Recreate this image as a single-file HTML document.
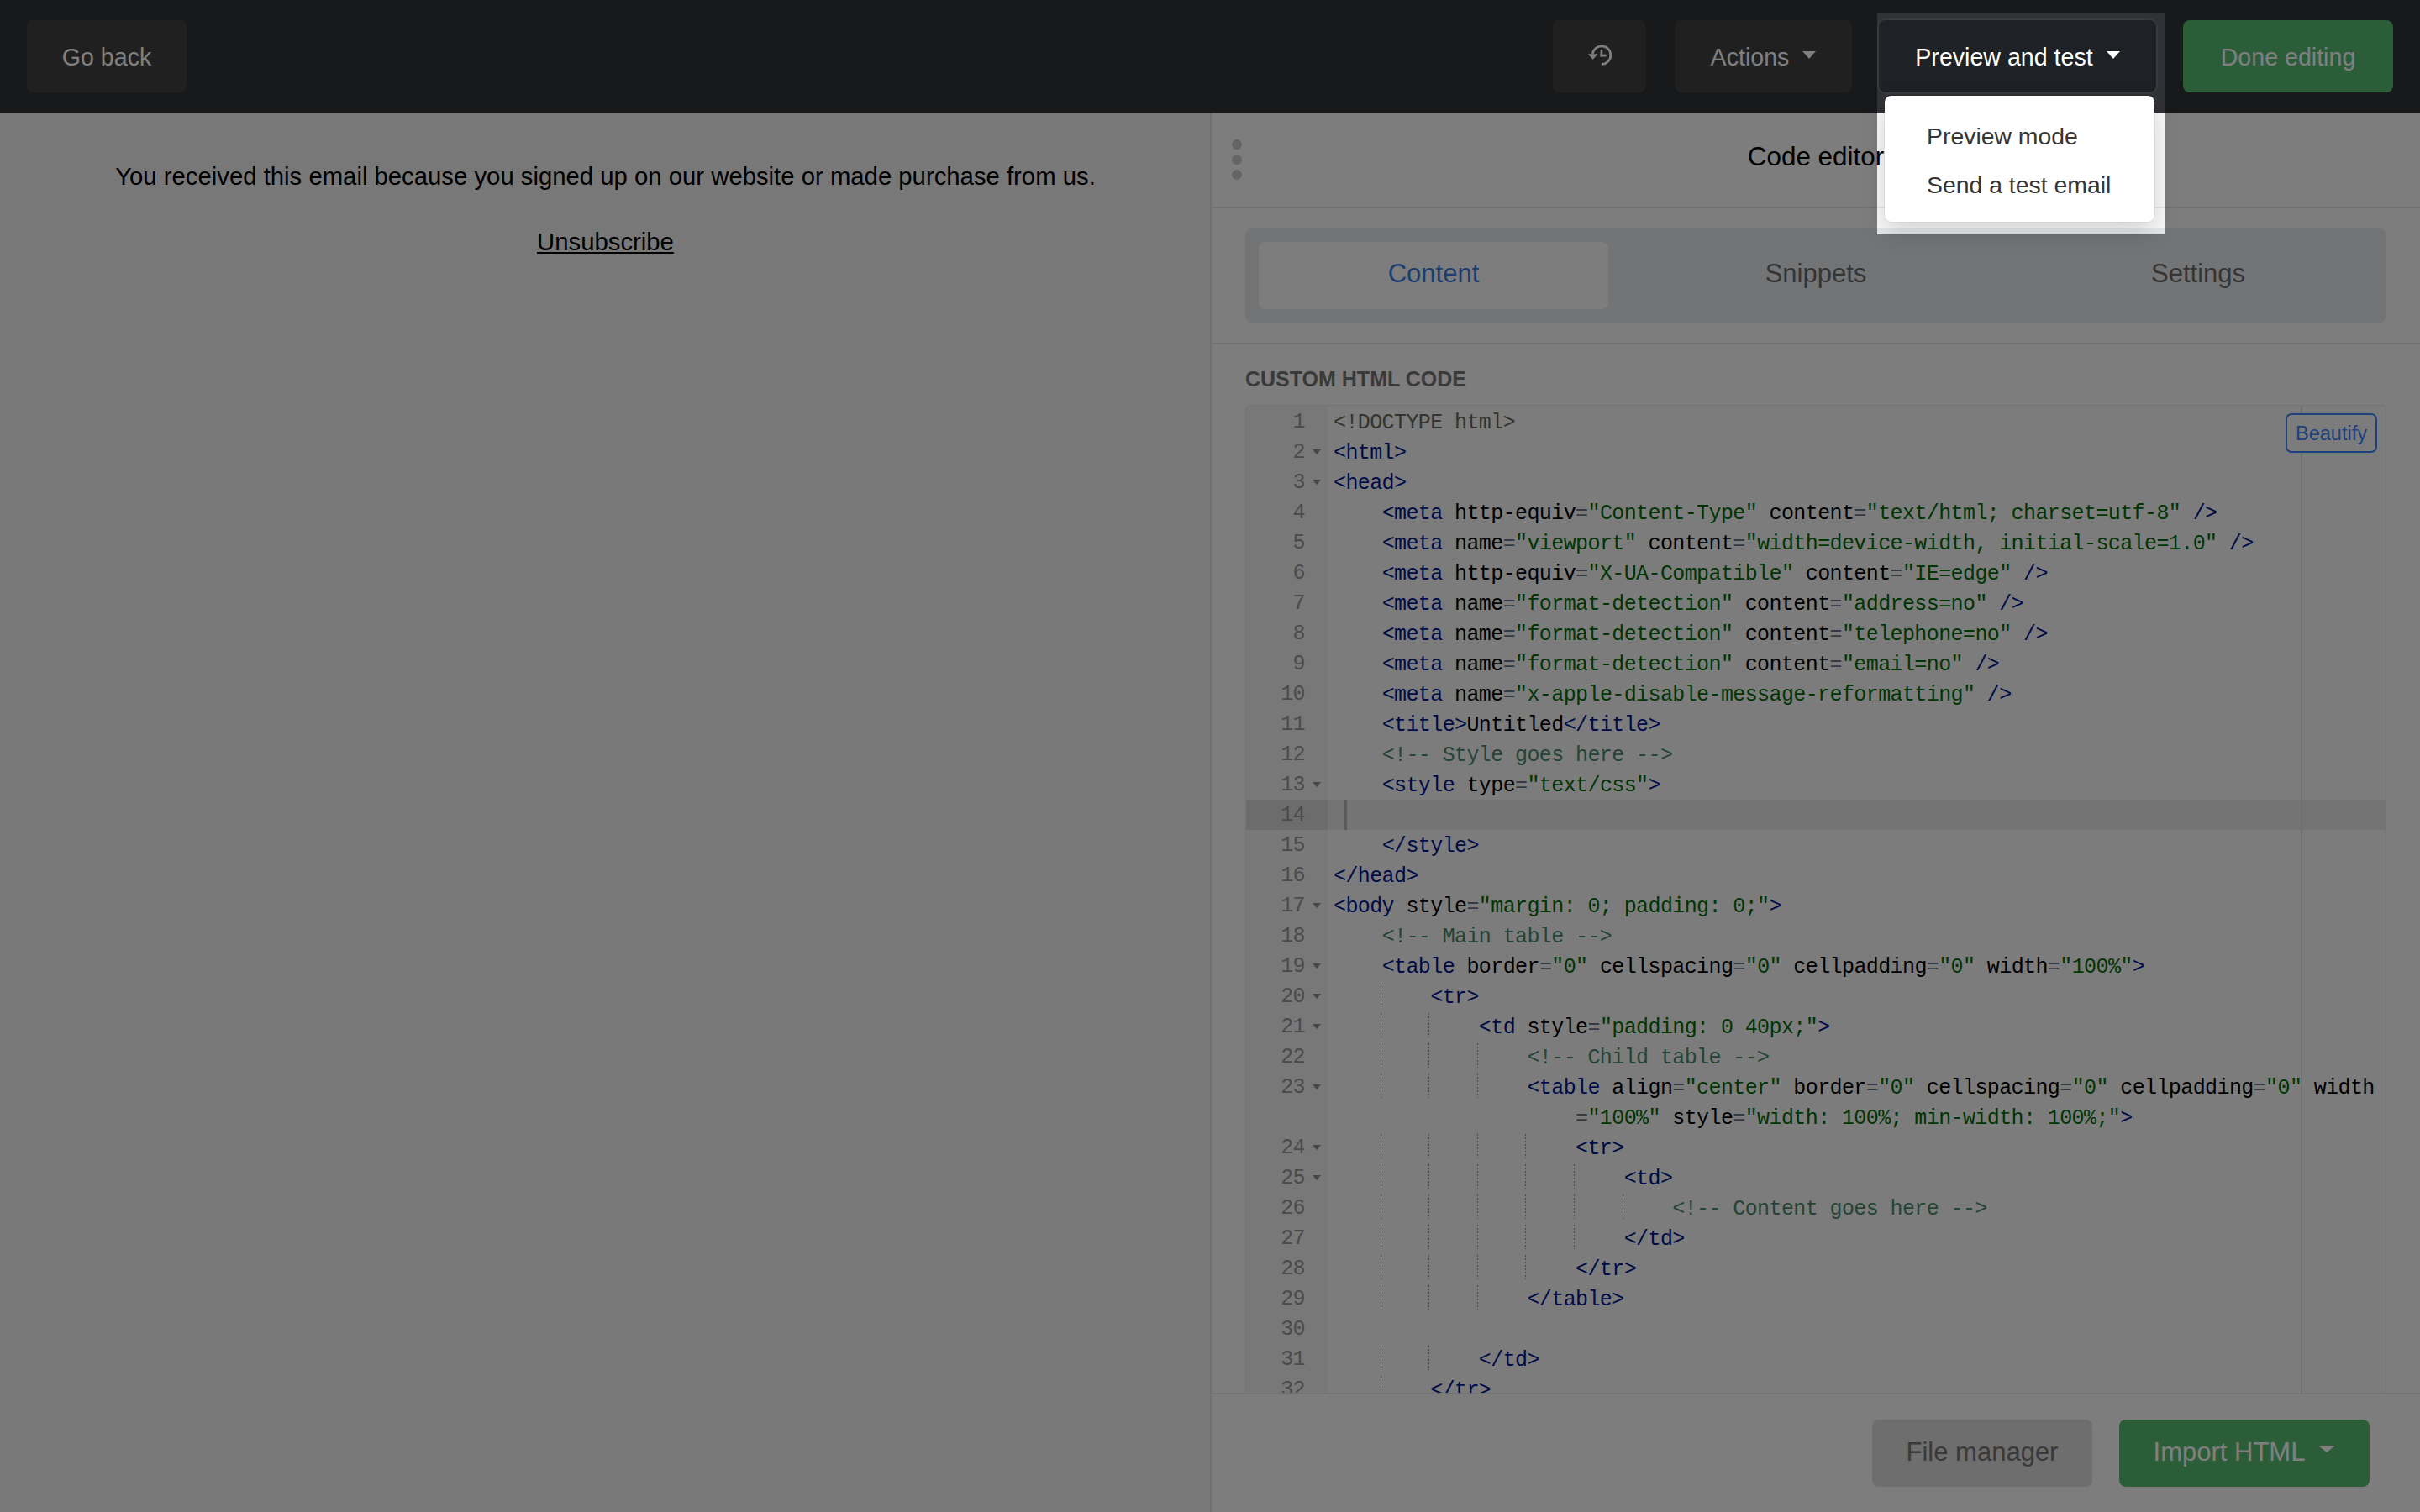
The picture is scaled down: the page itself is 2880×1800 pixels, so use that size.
<!DOCTYPE html>
<html>
<head>
<meta charset="utf-8">
<title>Code editor</title>
<style>
*{box-sizing:border-box;margin:0;padding:0}
html,body{width:2880px;height:1800px;overflow:hidden}
body{position:relative;background:#f4f4f4;font-family:"Liberation Sans",sans-serif;color:#000}
.abs{position:absolute}
.t1{position:absolute;line-height:1;white-space:pre}
#hdr{left:0;top:0;width:2880px;height:134px;background:#303236}
.hbtn{position:absolute;top:24px;height:86px;border-radius:8px;background:#404142;color:#fff;font-size:28.6px;line-height:88px;text-align:center;white-space:nowrap}
.caret{display:inline-block;width:0;height:0;border-left:8px solid transparent;border-right:8px solid transparent;border-top:9px solid currentColor;vertical-align:middle;position:relative;top:-5px;margin-left:16px}
#left{left:0;top:134px;width:1441px;height:1666px;background:#f0f0f0}
#divider{left:1440px;top:134px;width:2px;height:1666px;background:#e0e0e0}
#right{left:1442px;top:134px;width:1438px;height:1666px;background:#fafafa}
.hl{position:absolute;left:1442px;width:1438px;height:2px;background:#e8e8e8}
.dot{position:absolute;left:1466px;width:12px;height:12px;border-radius:50%;background:#c8c8c8}
#tabs{left:1482px;top:272px;width:1358px;height:112px;background:#e6e8ec;border-radius:8px}
.tab{position:absolute;top:288px;height:80px;width:416px;border-radius:8px;text-align:center;font-size:31px;line-height:1;padding-top:22px;color:#6a6a6a}
.tab.act{background:#fbfbfb;color:#3b7be0}
#editor{left:1482px;top:482px;width:1358px;height:1177px;border:1px solid #e6e8e8;border-radius:5px 5px 0 0;background:#f9f9f9;overflow:hidden}
#gutterbg{left:1483px;top:483px;width:97px;height:1175px;background:#f0f0f0}
.gact{position:absolute;left:1483px;width:97px;height:36px;background:#d9d9d9}
.lact{position:absolute;left:1580px;width:1259px;height:36px;background:#e9e9e9}
.gn{position:absolute;left:1483px;width:70px;height:36px;text-align:right;font-family:"Liberation Mono",monospace;font-size:25px;letter-spacing:-0.6px;line-height:38px;color:#979797;white-space:pre}
.fold{position:absolute;left:1562px;width:0;height:0;border-left:5px solid transparent;border-right:5px solid transparent;border-top:6px solid #8c8c8c}
.cl{position:absolute;left:1587px;height:36px;font-family:"Liberation Mono",monospace;font-size:25px;letter-spacing:-0.6px;line-height:40px;color:#000;white-space:pre}
.t{color:rgb(0,22,142)}
.s{color:rgb(3,106,7)}
.c{color:rgb(76,136,107)}
.o{color:rgb(104,118,135)}
.pe{color:rgb(104,104,91)}
.ig{position:absolute;width:1px;height:29px;margin-top:2px;background:repeating-linear-gradient(to bottom,#9a9a9a 0,#9a9a9a 2px,transparent 2px,transparent 4px)}
#clip{left:0;top:0;width:2880px;height:1658px;overflow:hidden}
#pm{left:2738px;top:483px;width:2px;height:1175px;background:#e2e2e2}
#beautify{left:2720px;top:492px;width:109px;height:47px;border:2px solid #3b82f6;border-radius:7px;background:#f9f9f9;color:#3b82f6;font-size:23.5px;line-height:1;padding-top:11px;text-align:center}
#cursor{left:1600px;top:952px;width:3px;height:36px;background:#b4b4b4}
.fbtn{position:absolute;top:1690px;height:80px;border-radius:8px;font-size:31px;line-height:1;padding-top:23px;text-align:center;white-space:nowrap}
#dd{left:2243px;top:114px;width:321px;height:150px;background:#fff;border-radius:8px;box-shadow:0 12px 32px rgba(0,0,0,0.16),0 0 0 1px rgba(0,0,0,0.05)}
#overlay{left:2234px;top:16px;width:342px;height:263px;box-shadow:0 0 0 4000px rgba(0,0,0,0.5);z-index:50;pointer-events:none}
</style>
</head>
<body>
<div id="hdr" class="abs">
  <div class="hbtn" style="left:32px;width:190px;">Go back</div>
  <div class="hbtn" style="left:1848px;width:111px;">
    <svg width="32" height="32" viewBox="0 0 32 32" style="position:absolute;left:42px;top:26px;overflow:visible">
      <path d="M5.3 14.3A10.8 10.8 0 1 1 15.9 26.4" fill="none" stroke="#fff" stroke-width="2.7"/>
      <polygon points="-0.2,14.3 11.6,14.3 5.7,20.8" fill="#fff"/>
      <rect x="14.6" y="9" width="2.6" height="8.5" fill="#fff"/>
      <rect x="14.6" y="14.7" width="7" height="2.8" fill="#fff"/>
    </svg>
  </div>
  <div class="hbtn" style="left:1993px;width:211px;">Actions<span class="caret"></span></div>
  <div class="hbtn" style="left:2236px;width:330px;background:#1e2125;box-shadow:0 0 0 2px #383b40;">Preview and test<span class="caret"></span></div>
  <div class="hbtn" style="left:2598px;width:250px;background:#58ba72;">Done editing</div>
</div>

<div id="left" class="abs"></div>
<div class="t1" style="left:0;width:1441px;text-align:center;top:195px;font-size:29.3px;color:#000">You received this email because you signed up on our website or made purchase from us.</div>
<div class="t1" style="left:0;width:1441px;text-align:center;top:273px;font-size:29.3px;color:#000;text-decoration:underline;text-decoration-thickness:2px;text-underline-offset:2px">Unsubscribe</div>

<div id="divider" class="abs"></div>
<div id="right" class="abs"></div>
<div class="dot" style="top:166px"></div>
<div class="dot" style="top:184px"></div>
<div class="dot" style="top:202px"></div>
<div class="t1" style="left:1442px;width:1438px;text-align:center;top:171px;font-size:31.4px;color:#000">Code editor</div>
<div class="hl" style="top:246px"></div>

<div id="tabs" class="abs"></div>
<div class="tab act" style="left:1498px">Content</div>
<div class="tab" style="left:1953px">Snippets</div>
<div class="tab" style="left:2408px">Settings</div>
<div class="hl" style="top:408px"></div>

<div class="t1" style="left:1482px;top:439px;font-size:25px;font-weight:700;color:#747474">CUSTOM HTML CODE</div>

<div id="editor" class="abs"></div>
<div id="gutterbg" class="abs"></div>
<div class="gact" style="top:952px"></div>
<div class="lact" style="top:952px"></div>
<div id="pm" class="abs"></div>
<div id="clip" class="abs">
<div class="ig" style="left:1643px;top:1168px"></div><div class="ig" style="left:1643px;top:1204px"></div><div class="ig" style="left:1700px;top:1204px"></div><div class="ig" style="left:1643px;top:1240px"></div><div class="ig" style="left:1700px;top:1240px"></div><div class="ig" style="left:1758px;top:1240px"></div><div class="ig" style="left:1643px;top:1276px"></div><div class="ig" style="left:1700px;top:1276px"></div><div class="ig" style="left:1758px;top:1276px"></div><div class="ig" style="left:1643px;top:1348px"></div><div class="ig" style="left:1700px;top:1348px"></div><div class="ig" style="left:1758px;top:1348px"></div><div class="ig" style="left:1815px;top:1348px"></div><div class="ig" style="left:1643px;top:1384px"></div><div class="ig" style="left:1700px;top:1384px"></div><div class="ig" style="left:1758px;top:1384px"></div><div class="ig" style="left:1815px;top:1384px"></div><div class="ig" style="left:1873px;top:1384px"></div><div class="ig" style="left:1643px;top:1420px"></div><div class="ig" style="left:1700px;top:1420px"></div><div class="ig" style="left:1758px;top:1420px"></div><div class="ig" style="left:1815px;top:1420px"></div><div class="ig" style="left:1873px;top:1420px"></div><div class="ig" style="left:1931px;top:1420px"></div><div class="ig" style="left:1643px;top:1456px"></div><div class="ig" style="left:1700px;top:1456px"></div><div class="ig" style="left:1758px;top:1456px"></div><div class="ig" style="left:1815px;top:1456px"></div><div class="ig" style="left:1873px;top:1456px"></div><div class="ig" style="left:1643px;top:1492px"></div><div class="ig" style="left:1700px;top:1492px"></div><div class="ig" style="left:1758px;top:1492px"></div><div class="ig" style="left:1815px;top:1492px"></div><div class="ig" style="left:1643px;top:1528px"></div><div class="ig" style="left:1700px;top:1528px"></div><div class="ig" style="left:1758px;top:1528px"></div><div class="ig" style="left:1643px;top:1600px"></div><div class="ig" style="left:1700px;top:1600px"></div><div class="ig" style="left:1643px;top:1636px"></div>
<div class="gn" style="top:484px">1</div>
<div class="gn" style="top:520px">2</div>
<div class="fold" style="top:535px"></div>
<div class="gn" style="top:556px">3</div>
<div class="fold" style="top:571px"></div>
<div class="gn" style="top:592px">4</div>
<div class="gn" style="top:628px">5</div>
<div class="gn" style="top:664px">6</div>
<div class="gn" style="top:700px">7</div>
<div class="gn" style="top:736px">8</div>
<div class="gn" style="top:772px">9</div>
<div class="gn" style="top:808px">10</div>
<div class="gn" style="top:844px">11</div>
<div class="gn" style="top:880px">12</div>
<div class="gn" style="top:916px">13</div>
<div class="fold" style="top:931px"></div>
<div class="gn" style="top:952px">14</div>
<div class="gn" style="top:988px">15</div>
<div class="gn" style="top:1024px">16</div>
<div class="gn" style="top:1060px">17</div>
<div class="fold" style="top:1075px"></div>
<div class="gn" style="top:1096px">18</div>
<div class="gn" style="top:1132px">19</div>
<div class="fold" style="top:1147px"></div>
<div class="gn" style="top:1168px">20</div>
<div class="fold" style="top:1183px"></div>
<div class="gn" style="top:1204px">21</div>
<div class="fold" style="top:1219px"></div>
<div class="gn" style="top:1240px">22</div>
<div class="gn" style="top:1276px">23</div>
<div class="fold" style="top:1291px"></div>
<div class="gn" style="top:1348px">24</div>
<div class="fold" style="top:1363px"></div>
<div class="gn" style="top:1384px">25</div>
<div class="fold" style="top:1399px"></div>
<div class="gn" style="top:1420px">26</div>
<div class="gn" style="top:1456px">27</div>
<div class="gn" style="top:1492px">28</div>
<div class="gn" style="top:1528px">29</div>
<div class="gn" style="top:1564px">30</div>
<div class="gn" style="top:1600px">31</div>
<div class="gn" style="top:1636px">32</div>
<div class="cl" style="top:484px"><span class="pe">&lt;!DOCTYPE html&gt;</span></div>
<div class="cl" style="top:520px"><span class="t">&lt;html</span><span class="t">&gt;</span></div>
<div class="cl" style="top:556px"><span class="t">&lt;head</span><span class="t">&gt;</span></div>
<div class="cl" style="top:592px">    <span class="t">&lt;meta</span> http-equiv<span class="o">=</span><span class="s">"Content-Type"</span> content<span class="o">=</span><span class="s">"text/html; charset=utf-8"</span> <span class="t">/&gt;</span></div>
<div class="cl" style="top:628px">    <span class="t">&lt;meta</span> name<span class="o">=</span><span class="s">"viewport"</span> content<span class="o">=</span><span class="s">"width=device-width, initial-scale=1.0"</span> <span class="t">/&gt;</span></div>
<div class="cl" style="top:664px">    <span class="t">&lt;meta</span> http-equiv<span class="o">=</span><span class="s">"X-UA-Compatible"</span> content<span class="o">=</span><span class="s">"IE=edge"</span> <span class="t">/&gt;</span></div>
<div class="cl" style="top:700px">    <span class="t">&lt;meta</span> name<span class="o">=</span><span class="s">"format-detection"</span> content<span class="o">=</span><span class="s">"address=no"</span> <span class="t">/&gt;</span></div>
<div class="cl" style="top:736px">    <span class="t">&lt;meta</span> name<span class="o">=</span><span class="s">"format-detection"</span> content<span class="o">=</span><span class="s">"telephone=no"</span> <span class="t">/&gt;</span></div>
<div class="cl" style="top:772px">    <span class="t">&lt;meta</span> name<span class="o">=</span><span class="s">"format-detection"</span> content<span class="o">=</span><span class="s">"email=no"</span> <span class="t">/&gt;</span></div>
<div class="cl" style="top:808px">    <span class="t">&lt;meta</span> name<span class="o">=</span><span class="s">"x-apple-disable-message-reformatting"</span> <span class="t">/&gt;</span></div>
<div class="cl" style="top:844px">    <span class="t">&lt;title</span><span class="t">&gt;</span>Untitled<span class="t">&lt;/title</span><span class="t">&gt;</span></div>
<div class="cl" style="top:880px">    <span class="c">&lt;!-- Style goes here --&gt;</span></div>
<div class="cl" style="top:916px">    <span class="t">&lt;style</span> type<span class="o">=</span><span class="s">"text/css"</span><span class="t">&gt;</span></div>
<div class="cl" style="top:952px"> </div>
<div class="cl" style="top:988px">    <span class="t">&lt;/style</span><span class="t">&gt;</span></div>
<div class="cl" style="top:1024px"><span class="t">&lt;/head</span><span class="t">&gt;</span></div>
<div class="cl" style="top:1060px"><span class="t">&lt;body</span> style<span class="o">=</span><span class="s">"margin: 0; padding: 0;"</span><span class="t">&gt;</span></div>
<div class="cl" style="top:1096px">    <span class="c">&lt;!-- Main table --&gt;</span></div>
<div class="cl" style="top:1132px">    <span class="t">&lt;table</span> border<span class="o">=</span><span class="s">"0"</span> cellspacing<span class="o">=</span><span class="s">"0"</span> cellpadding<span class="o">=</span><span class="s">"0"</span> width<span class="o">=</span><span class="s">"100%"</span><span class="t">&gt;</span></div>
<div class="cl" style="top:1168px">        <span class="t">&lt;tr</span><span class="t">&gt;</span></div>
<div class="cl" style="top:1204px">            <span class="t">&lt;td</span> style<span class="o">=</span><span class="s">"padding: 0 40px;"</span><span class="t">&gt;</span></div>
<div class="cl" style="top:1240px">                <span class="c">&lt;!-- Child table --&gt;</span></div>
<div class="cl" style="top:1276px">                <span class="t">&lt;table</span> align<span class="o">=</span><span class="s">"center"</span> border<span class="o">=</span><span class="s">"0"</span> cellspacing<span class="o">=</span><span class="s">"0"</span> cellpadding<span class="o">=</span><span class="s">"0"</span> width</div>
<div class="cl" style="top:1312px">                    <span class="o">=</span><span class="s">"100%"</span> style<span class="o">=</span><span class="s">"width: 100%; min-width: 100%;"</span><span class="t">&gt;</span></div>
<div class="cl" style="top:1348px">                    <span class="t">&lt;tr</span><span class="t">&gt;</span></div>
<div class="cl" style="top:1384px">                        <span class="t">&lt;td</span><span class="t">&gt;</span></div>
<div class="cl" style="top:1420px">                            <span class="c">&lt;!-- Content goes here --&gt;</span></div>
<div class="cl" style="top:1456px">                        <span class="t">&lt;/td</span><span class="t">&gt;</span></div>
<div class="cl" style="top:1492px">                    <span class="t">&lt;/tr</span><span class="t">&gt;</span></div>
<div class="cl" style="top:1528px">                <span class="t">&lt;/table</span><span class="t">&gt;</span></div>
<div class="cl" style="top:1564px"></div>
<div class="cl" style="top:1600px">            <span class="t">&lt;/td</span><span class="t">&gt;</span></div>
<div class="cl" style="top:1636px">        <span class="t">&lt;/tr</span><span class="t">&gt;</span></div>
<div id="cursor" class="abs"></div>
</div>
<div id="beautify" class="abs">Beautify</div>

<div class="hl" style="top:1658px"></div>
<div class="fbtn" style="left:2228px;width:262px;background:#dcdcdc;color:#747474">File manager</div>
<div class="fbtn" style="left:2522px;width:298px;background:#58ba72;color:#fff">Import HTML<span class="caret" style="top:-6px;margin-left:16px;border-left-width:10px;border-right-width:10px;border-top-width:8px"></span></div>

<div id="dd" class="abs">
  <div class="t1" style="left:50px;top:34px;font-size:28.4px;color:#353535">Preview mode</div>
  <div class="t1" style="left:50px;top:92px;font-size:28.4px;color:#353535">Send a test email</div>
</div>
<div id="overlay" class="abs"></div>
</body>
</html>
